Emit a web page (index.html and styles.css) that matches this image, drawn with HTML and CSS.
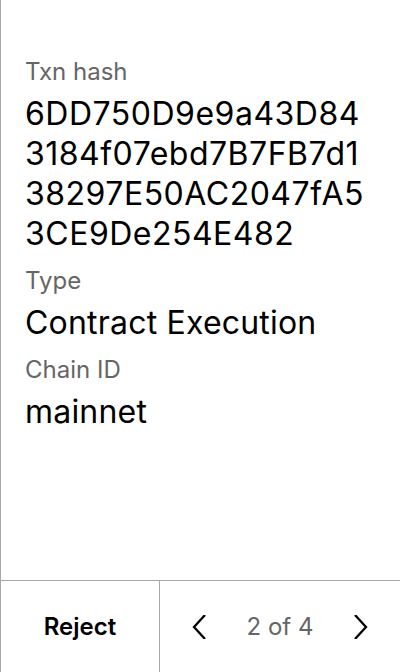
FILE: index.html
```html
<!DOCTYPE html>
<html lang="en">
<head>
<meta charset="utf-8">
<title>Transaction</title>
<link rel="stylesheet" href="styles.css">
</head>
<body>
<div class="screen">
  <main class="details">
    <div class="field">
      <div class="label">Txn hash</div>
      <div class="value hash">6DD750D9e9a43D84<br>3184f07ebd7B7FB7d1<br>38297E50AC2047fA5<br>3CE9De254E482</div>
    </div>
    <div class="field">
      <div class="label">Type</div>
      <div class="value">Contract Execution</div>
    </div>
    <div class="field">
      <div class="label">Chain ID</div>
      <div class="value">mainnet</div>
    </div>
  </main>
  <footer class="footer">
    <button class="reject">Reject</button>
    <div class="pager">
      <button class="chev" aria-label="Previous">
        <svg width="24" height="24" viewBox="0 0 24 24"><path d="M17 0 L6 12 L17 24" fill="none" stroke="#000" stroke-width="2.3"/></svg>
      </button>
      <span class="count">2 of 4</span>
      <button class="chev" aria-label="Next">
        <svg width="24" height="24" viewBox="0 0 24 24"><path d="M7 0 L18 12 L7 24" fill="none" stroke="#000" stroke-width="2.3"/></svg>
      </button>
    </div>
  </footer>
</div>
</body>
</html>
```
FILE: styles.css
```css
* { box-sizing: border-box; }
html, body { margin: 0; padding: 0; }
body {
  font-family: Inter, "Liberation Sans", sans-serif;
  background: #fff;
  color: #000;
}
.screen {
  width: 400px;
  height: 672px;
  border-left: 1px solid #a8a8a8;
  display: flex;
  flex-direction: column;
}
.details {
  flex: 1;
  padding: 57px 24px 0 24px;
  display: flex;
  flex-direction: column;
}
.label {
  font-size: 24px;
  line-height: 30px;
  color: #666;
}
.value {
  font-size: 32px;
  line-height: 40px;
  letter-spacing: 0.2px;
  color: #000;
  margin-top: 7px;
}
.hash { letter-spacing: 0.5px; }
.field + .field { margin-top: 12px; }
.footer {
  height: 92px;
  border-top: 1px solid #a8a8a8;
  display: flex;
}
.reject {
  width: 159px;
  border: none;
  border-right: 1px solid #a8a8a8;
  background: none;
  font-family: inherit;
  font-size: 24px;
  font-weight: 600;
  color: #000;
  padding: 0;
}
.pager {
  flex: 1;
  display: flex;
  align-items: center;
  justify-content: space-between;
  padding: 0 28px 0 28px;
}
.chev {
  border: none;
  background: none;
  padding: 0;
  width: 24px;
  height: 24px;
  display: flex;
}
.count {
  font-size: 24px;
  color: #666;
}
```
